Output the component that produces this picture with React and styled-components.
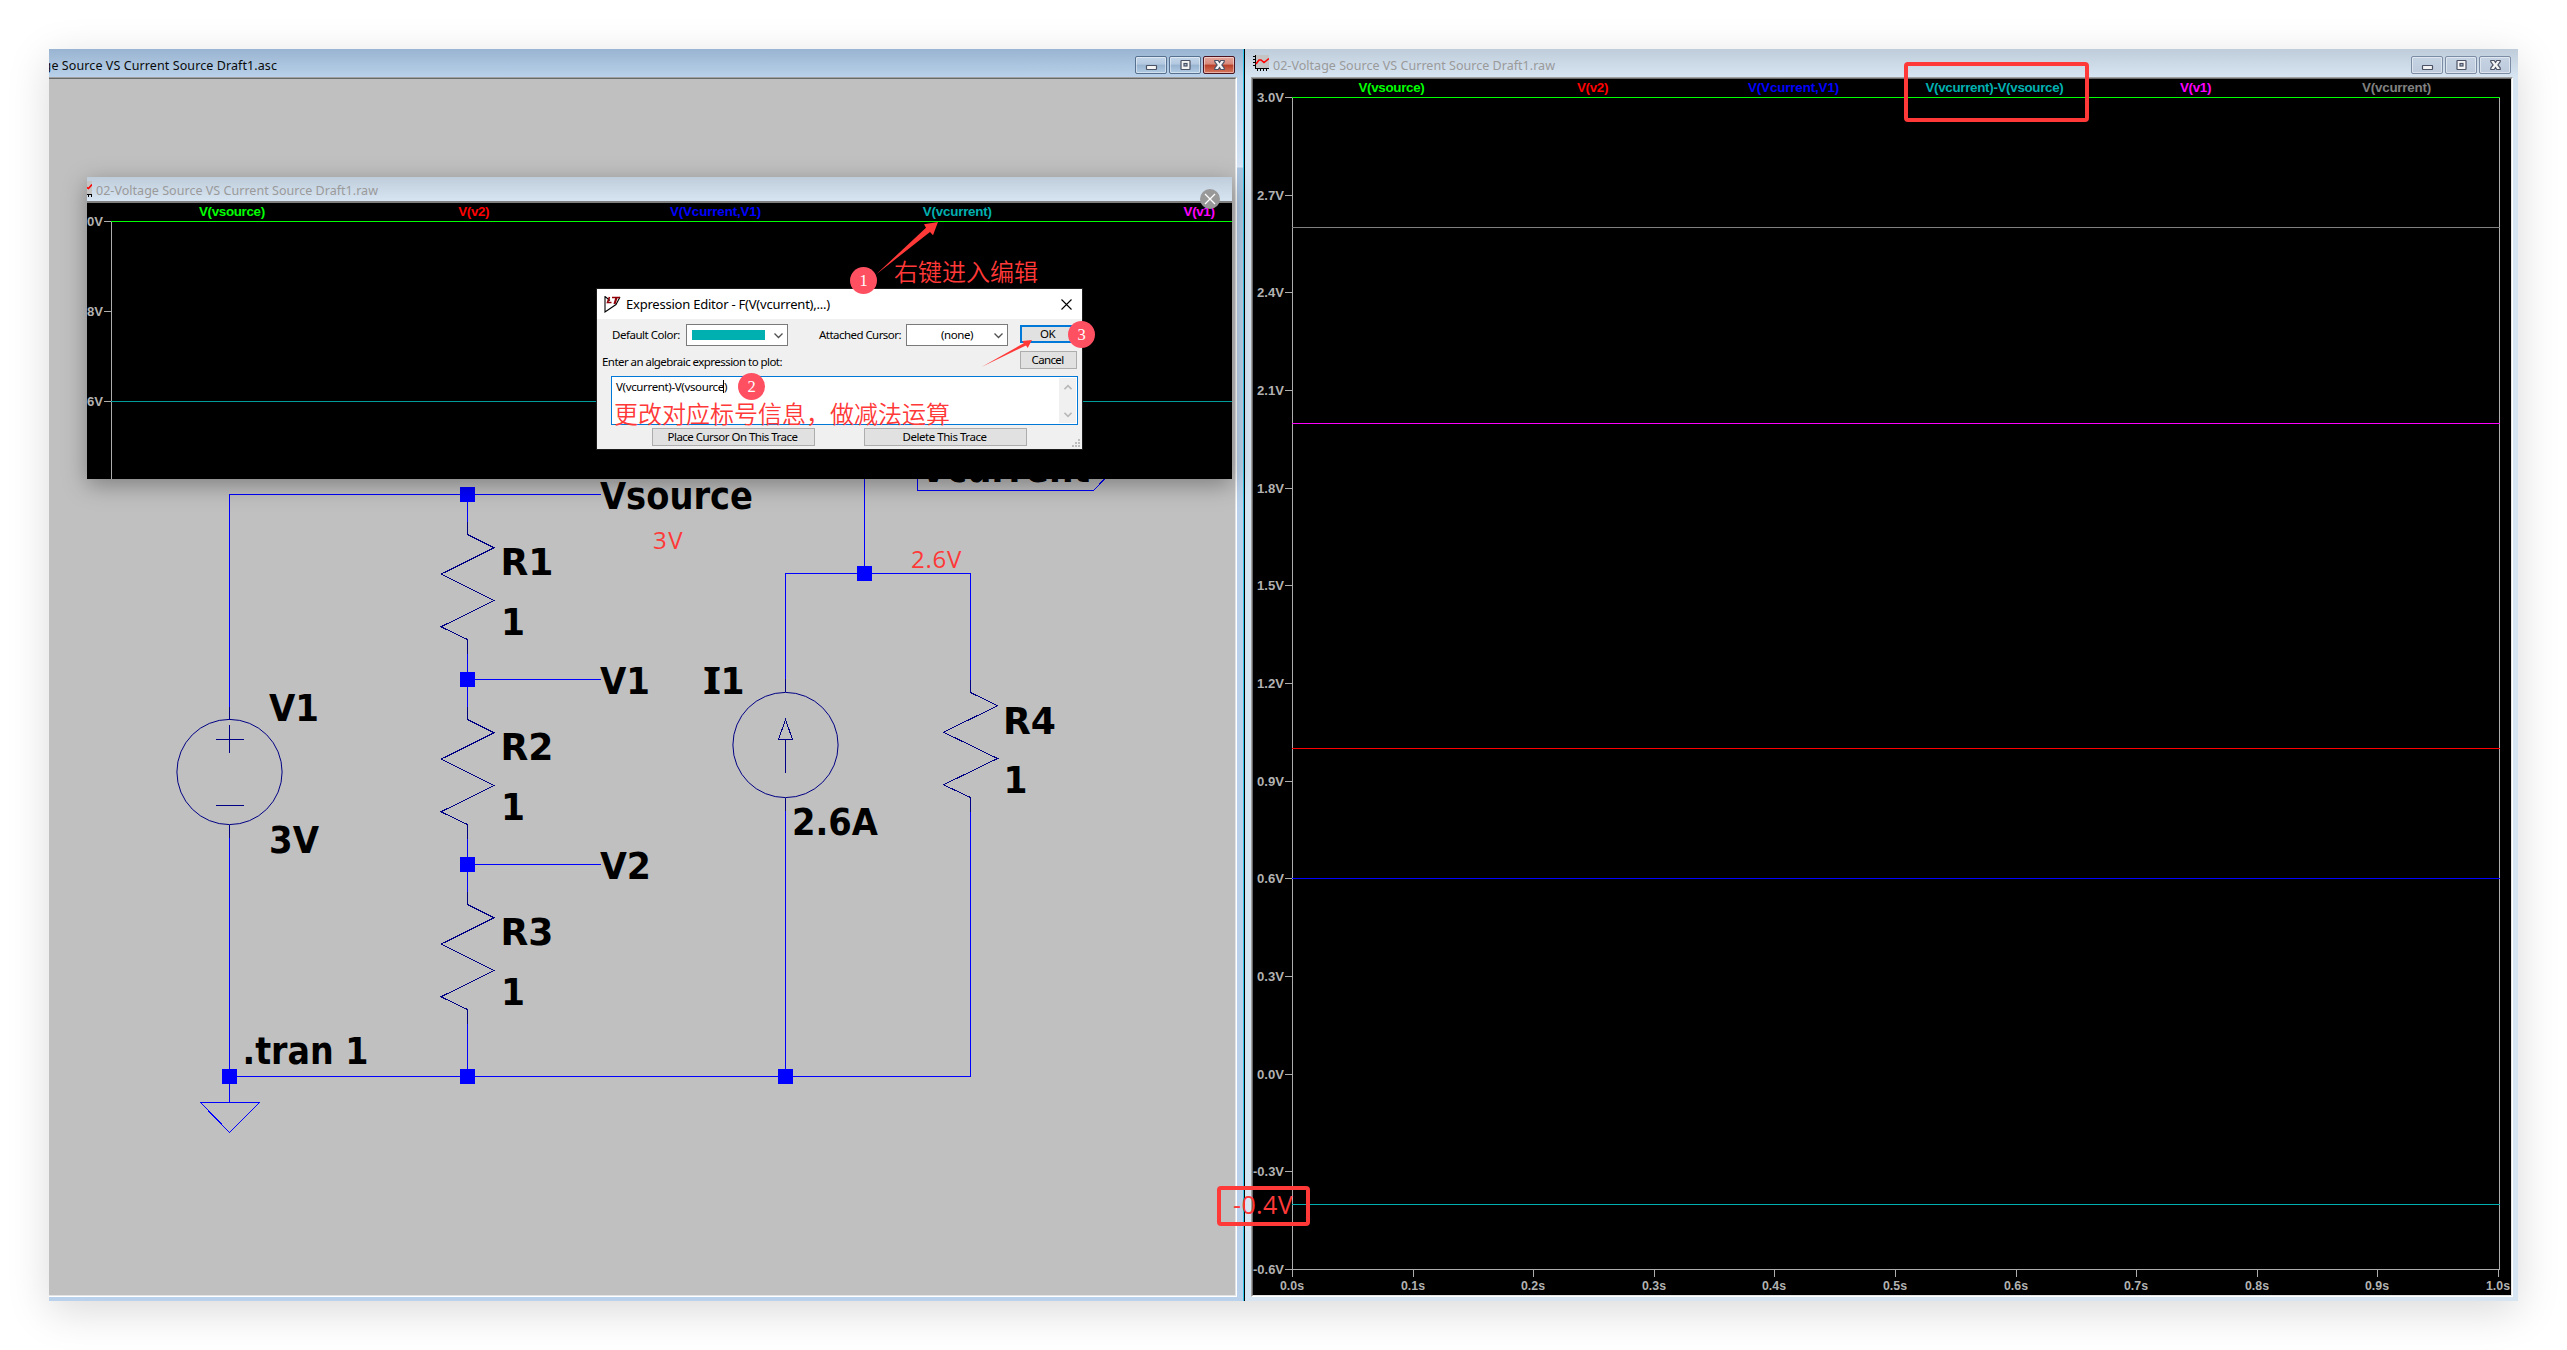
import React, { useLayoutEffect, useRef, useState } from "react";
import styled, { createGlobalStyle, css } from "styled-components";

const Global = createGlobalStyle`
  * { box-sizing: border-box; }
  body { margin: 0; background: #fff; overflow: hidden; }
`;

const UI = `"Noto Sans", "Open Sans", "Noto Sans CJK SC", sans-serif`;
const RED = "#ff3838";

/* Text spread to an exact width by adjusting its letter spacing */
const FitText = styled.span`
  display: inline-block;
  white-space: pre;
  flex: none;
`;
function Fit({ w, children }) {
  const ref = useRef(null);
  const [ls, setLs] = useState(0);
  useLayoutEffect(() => {
    const natural = ref.current.getBoundingClientRect().width;
    setLs((w - natural) / children.length);
  }, [w, children]);
  return (
    <FitText ref={ref} style={{ letterSpacing: ls }}>
      {children}
    </FitText>
  );
}

const Page = styled.div`
  width: 2567px;
  height: 1350px;
  padding: 49px;
  font-family: ${UI};
  position: relative;
  overflow: hidden;
`;
const Desktop = styled.main`
  display: flex;
  width: 2469px;
  height: 1252px;
  box-shadow: 0 10px 40px rgba(0, 0, 0, 0.15);
`;
const Window = styled.section`
  display: flex;
  flex-direction: column;
  width: ${(p) => p.$w}px;
  height: 1252px;
  padding: ${(p) => (p.$active ? "0 6px 4px 0" : "0 5px 4px 6px")};
  background: ${(p) =>
    p.$active
      ? "linear-gradient(#99b4d1 0, #b9d1ea 28px, #d3e2f4 115px, #dae7f6 118px, #abc5e0 119px, #b9d1ea 250px)"
      : "linear-gradient(#bfcddb 0, #d7e4f2 28px)"};
`;
const Divider = styled.div`
  width: 2px;
  background: #000;
  border-left: 1px solid #2cc4e8;
`;
const TitleBar = styled.header`
  display: flex;
  align-items: center;
  height: ${(p) => p.$h || 28}px;
  flex: none;
  gap: 4px;
  overflow: hidden;
  padding: 0 0 0 ${(p) => p.$pl || 0}px;
  background: ${(p) =>
    p.$active ? "linear-gradient(#99b4d1, #b9d1ea)" : "linear-gradient(#bfcddb, #d7e4f2)"};
`;
const Title = styled.div`
  flex: 1;
  font-size: 12.5px;
  line-height: 18px;
  padding-top: ${(p) => p.$pt || 6}px;
  margin-left: ${(p) => p.$ml || 0}px;
  color: ${(p) => (p.$active ? "#0a0a0a" : "#9a9a9a")};
`;
const Controls = styled.div`
  display: flex;
  gap: 2px;
  align-self: flex-start;
  margin: 7px ${(p) => p.$mr}px 0 0;
`;
const ControlButton = styled.span`
  width: 32px;
  height: 18px;
  border-radius: 2px;
  display: grid;
  place-items: center;
  border: 1px solid #7d8ca5;
  box-shadow: inset 0 0 0 1px rgba(255, 255, 255, 0.45);
  background: linear-gradient(#c5d3e3, #bccadc);
  ${(p) =>
    p.$kind === "active" &&
    css`
      border-color: #56708f;
      background: linear-gradient(#c3d6ea 0, #b3c8df 45%, #98b3d0 50%, #b1cbe4 100%);
    `}
  ${(p) =>
    p.$kind === "close" &&
    css`
      border-color: #4b1420;
      background: linear-gradient(#e5a79c 0, #d7887a 45%, #b93f29 50%, #d5775f 100%);
    `}
`;
const Body = styled.div`
  flex: 1;
  min-height: 0;
  display: flex;
  border-top: 1px solid #a0a0a0;
  border-left: ${(p) => (p.$cut ? 0 : 1)}px solid #a0a0a0;
  border-right: 1px solid #fff;
  border-bottom: 1px solid #fff;
`;
const BodyInner = styled.div`
  flex: 1;
  min-width: 0;
  display: flex;
  flex-direction: column;
  background: ${(p) => p.$bg};
  border-top: 1px solid #696969;
  border-left: ${(p) => (p.$cut ? 0 : 1)}px solid #696969;
  border-right: 1px solid #e3e3e3;
  border-bottom: 1px solid #e3e3e3;
`;
const Legend = styled.div`
  display: grid;
  grid-template-columns: repeat(6, ${(p) => p.$col}px);
  padding-left: ${(p) => p.$pl}px;
  height: 18px;
  flex: none;
`;
const LegendItem = styled.div`
  display: flex;
  justify-content: center;
  font: bold 13.4px/17px "Liberation Sans", Arial, sans-serif;
  color: ${(p) => p.$c};
`;
const Drawing = styled.svg`
  display: block;
  flex: none;
  overflow: ${(p) => (p.$clip ? "hidden" : "visible")};
`;
const AxisText = styled.text`
  font: bold 13.4px "Liberation Sans", Arial, sans-serif;
  fill: #b2b2b2;
`;
const PartText = styled.text`
  font-family: ${(p) => (p.$serifI ? `"Noto Sans"` : `"DejaVu Sans Condensed", "DejaVu Sans"`)}, sans-serif;
  font-stretch: ${(p) => (p.$serifI ? "normal" : "condensed")};
  font-weight: bold;
  font-size: 37.5px;
  fill: #000;
`;

/* Windows floating over the desktop */
const FloatingPlot = styled.section`
  position: absolute;
  left: 87px;
  top: 177px;
  width: 1145px;
  height: 302px;
  display: flex;
  flex-direction: column;
  background: #000;
  box-shadow: 0 6px 22px rgba(0, 0, 0, 0.34);
`;
const PlotClip = styled.div`
  flex: 1;
  overflow: hidden;
  border-top: 2px solid #808080;
`;
const CloseBadge = styled.span`
  position: absolute;
  left: 1113px;
  top: 12px;
  width: 20px;
  height: 20px;
  border-radius: 50%;
  background: #989898;
  display: grid;
  place-items: center;
`;
const Dialog = styled.section`
  position: absolute;
  left: 596px;
  top: 288px;
  width: 487px;
  height: 162px;
  border: 1px solid #1c1c1c;
  background: #f0f0f0;
  display: flex;
  flex-direction: column;
  font-size: 11.5px;
  line-height: 16px;
  color: #000;
`;
const DialogTitle = styled.header`
  height: 30px;
  flex: none;
  background: #fff;
  display: flex;
  align-items: center;
  gap: 5px;
  padding: 0 10px 0 7px;
  font-size: 13px;
`;
const Spacer = styled.div`
  flex: 1;
`;
const DialogRows = styled.div`
  display: flex;
  height: 57px;
  flex: none;
`;
const Fields = styled.div`
  width: 423px;
  padding: 5px 0 0 5px;
  display: flex;
  flex-direction: column;
  align-items: flex-start;
  gap: 8px;
`;
const FieldRow = styled.div`
  display: flex;
  height: 22px;
  align-items: center;
  padding-left: 10px;
`;
const Select = styled.div`
  width: 102px;
  height: 22px;
  margin: 0 ${(p) => p.$mr || 0}px 0 ${(p) => p.$ml}px;
  border: 1px solid #7a7a7a;
  background: #fff;
  display: flex;
  align-items: center;
  justify-content: space-between;
  padding: 0 4px 0 ${(p) => p.$pl}px;
`;
const Swatch = styled.i`
  width: 73px;
  height: 10px;
  background: #00b0b0;
`;
const Actions = styled.div`
  display: flex;
  flex-direction: column;
  gap: 8px;
  padding-top: 6px;
`;
const Button = styled.div`
  width: ${(p) => p.$w}px;
  height: 18px;
  background: #e1e1e1;
  border: ${(p) => (p.$primary ? "2px solid #0078d7" : "1px solid #adadad")};
  display: flex;
  align-items: center;
  justify-content: center;
  padding-right: 2px;
`;
const Editor = styled.div`
  margin: 0 4px 0 14px;
  height: 49px;
  flex: none;
  border: 1px solid #0078d7;
  background: #fff;
  display: flex;
  justify-content: space-between;
  padding: 1px;
`;
const Expression = styled.div`
  padding-left: 3px;
  height: 17px;
  display: flex;
  align-items: center;
`;
const Caret = styled.i`
  width: 1px;
  height: 13px;
  margin-left: -4px;
  background: #000;
`;
const ScrollTrack = styled.div`
  width: 17px;
  background: #f0f0f0;
  display: flex;
  flex-direction: column;
  align-items: center;
  justify-content: space-between;
  padding: 6px 0 5px;
`;
const Footer = styled.div`
  display: flex;
  gap: 49px;
  padding: 3px 0 0 55px;
`;
const Grip = styled.svg`
  position: absolute;
  right: 2px;
  bottom: 2px;
`;

/* Review marks drawn above everything */
const Note = styled.div`
  position: absolute;
  left: ${(p) => p.$x}px;
  top: ${(p) => p.$y}px;
  height: 34px;
  line-height: 34px;
  font-size: ${(p) => p.$s || 24}px;
  font-family: ${(p) => (p.$cjk ? `"Noto Sans CJK SC", sans-serif` : `"Open Sans", sans-serif`)};
  font-weight: ${(p) => (p.$cjk ? 350 : 400)};
  color: ${RED};
  white-space: nowrap;
`;
const Frame = styled.div`
  position: absolute;
  left: ${(p) => p.$x}px;
  top: ${(p) => p.$y}px;
  width: ${(p) => p.$w}px;
  height: ${(p) => p.$h}px;
  border: 4px solid ${RED};
  border-radius: 4px;
`;
const Step = styled.div`
  position: absolute;
  left: ${(p) => p.$x - 13.5}px;
  top: ${(p) => p.$y - 13.5}px;
  width: 27px;
  height: 27px;
  border-radius: 50%;
  background: #ff5062;
  color: #fff;
  font: 16.5px/28px "Liberation Serif", serif;
  text-align: center;
`;
const Arrows = styled.svg`
  position: absolute;
  left: 870px;
  top: 215px;
  pointer-events: none;
`;

const GLYPHS = {
  min: <rect x="1.5" y="6.5" width="10" height="4" rx="0.5" />,
  max: (
    <g>
      <rect x="2" y="1.5" width="9" height="9" rx="0.5" />
      <rect x="5" y="4.5" width="3" height="2.5" fill="#aebfd4" />
    </g>
  ),
  close: <path d="M1.8 1.5h3.4L6.5 3.4 7.8 1.5h3.4v1.4L8.9 5.9l2.3 3v1.6H7.8L6.5 8.6 5.2 10.5H1.8V8.9L4.1 5.9 1.8 2.9z" />,
};
function WindowControls({ active, mr }) {
  return (
    <Controls $mr={mr}>
      {["min", "max", "close"].map((k) => (
        <ControlButton key={k} $kind={active ? (k === "close" ? "close" : "active") : "idle"}>
          <svg width="13" height="12" fill="#f4f4f4" stroke="#4c5265" strokeWidth="1.2">
            {GLYPHS[k]}
          </svg>
        </ControlButton>
      ))}
    </Controls>
  );
}

function PlotIcon() {
  return (
    <svg width="16" height="17" viewBox="0 0 16 17" shapeRendering="crispEdges">
      <rect x="2" width="14" height="14" fill="#c4c4c4" />
      <path d="M2.5 0v14M2 13.5h14M0 1.5h2M0 4.5h2M0 7.5h2M0 10.5h2M4.5 14v2M7.5 14v2M10.5 14v2M13.5 14v2" stroke="#000" fill="none" />
      <path d="M3 9l3-4h2l3 2.500 5-4" stroke="#f00" strokeWidth="1.6" fill="none" shapeRendering="auto" />
    </svg>
  );
}

function Plot({ box, axisX, endX, top, bottom, ticks, traces, xTicks, labelW }) {
  const [x, y, w, h] = box;
  return (
    <Drawing width={w} height={h} viewBox={box.join(" ")}>
      <g stroke="#adadad" shapeRendering="crispEdges">
        <path d={`M${axisX + 0.5} ${top}V${bottom + 1}`} />
        {endX && <path d={`M${endX - 0.5} ${top}V${bottom}M${axisX} ${bottom + 0.5}H${endX}`} />}
        {ticks.map(([, ty]) => (
          <path key={ty} d={`M${axisX - 7} ${ty + 0.5}h7`} />
        ))}
        {xTicks.map(([, tx]) => (
          <path key={tx} d={`M${tx + 0.5} ${bottom}v8`} />
        ))}
      </g>
      {ticks.map(([label, ty]) => (
        <AxisText
          key={label}
          x={axisX - 8}
          y={ty + 5}
          textAnchor="end"
          textLength={label[0] === "-" ? labelW + 4 : labelW}
          lengthAdjust="spacingAndGlyphs"
        >
          {label}
        </AxisText>
      ))}
      {xTicks.map(([label, tx]) => (
        <AxisText key={label} x={tx} y={bottom + 21} textAnchor="middle" textLength="24" lengthAdjust="spacingAndGlyphs">
          {label}
        </AxisText>
      ))}
      <g shapeRendering="crispEdges">
        {traces.map(([c, ty]) => (
          <path key={c} d={`M${axisX} ${ty + 0.5}H${endX || x + w}`} stroke={c} />
        ))}
      </g>
    </Drawing>
  );
}

const MAIN_LEGEND = [
  ["V(vsource)", "#00ff00", 66],
  ["V(v2)", "#ff0000", 31],
  ["V(Vcurrent,V1)", "#0000ff", 91],
  ["V(vcurrent)-V(vsource)", "#00b0b0", 138],
  ["V(v1)", "#ff00ff", 31],
  ["V(vcurrent)", "#808080", 69],
];
const FLOAT_LEGEND = [
  ["V(vsource)", "#00ff00", 66],
  ["V(v2)", "#ff0000", 31],
  ["V(Vcurrent,V1)", "#0000ff", 91],
  ["V(vcurrent)", "#00b0b0", 69],
  ["V(v1)", "#ff00ff", 31],
];
const V_TICKS = Array.from({ length: 13 }, (_, i) => [
  `${(3 - i * 0.3).toFixed(1).replace("-0.0", "0.0")}V`,
  Math.round(97 + i * 97.67),
]);
const S_TICKS = Array.from({ length: 11 }, (_, i) => [`${(i / 10).toFixed(1)}s`, Math.round(1292 + i * 120.6)]);

const zigzag = (x, y, half) =>
  `M${x} ${y - 13}V${y}L${x + half} ${y + 13.3}L${x - half} ${y + 39.7}L${x + half} ${y + 66}L${x - half} ${y + 92.3}L${x} ${y + 105}V${y + 119}`;

const PARTS = [
  ["Vsource", 600, 509, 153],
  ["R1", 500.500, 575, 53],
  ["1", 501, 635, 24],
  ["V1", 600, 694, 50],
  ["R2", 500.500, 760, 53],
  ["1", 501, 820, 24],
  ["V2", 600, 879, 51],
  ["R3", 500.500, 945, 53],
  ["1", 501, 1005, 24],
  ["V1", 269, 721, 50],
  ["3V", 269, 852.5, 50],
  [".tran 1", 242.500, 1063.5, 126],
  ["1", 720.500, 694, 24],
  ["2.6A", 792, 835, 86],
  ["R4", 1003, 734, 53],
  ["1", 1003.500, 793, 24],
  ["Vcurrent", 920, 482, 170],
];
const NODES = [
  [467, 494],
  [467, 679],
  [467, 864],
  [467, 1076],
  [229, 1076],
  [864, 573],
  [785, 1076],
];

function Schematic() {
  return (
    <Drawing width="1186" height="1216" viewBox="49 79 1186 1216" $clip>
      <g fill="none" stroke="#0000ff" shapeRendering="crispEdges">
        <path d="M229.500 720V494.500H601M467.500 494V534M467.500 640V720M467.500 825V905M467.500 1010V1076M467.500 679.500H601M467.500 864.500H601" />
        <path d="M229.500 825V1102.500M200.500 1102.500H259.500L229.500 1132.500ZM229 1076.500H970.500V799M970.500 692V573.500H785.500V692M785.500 798V1076M864.500 573V440" />
        <path d="M917.500 440V490.500H1093.500L1116 467" />
      </g>
      <g fill="none" stroke="#000084" strokeWidth="1">
        <g shapeRendering="crispEdges">
          <path d={zigzag(467.5, 534.5, 26.5)} />
          <path d={zigzag(467.5, 719.5, 26.5)} />
          <path d={zigzag(467.5, 904.5, 26.5)} />
          <path d={zigzag(970.5, 692.5, 27)} />
          <path d="M229.500 707V719M229.500 825V838M216 739.500H244M229.500 725V753M216 805.500H244" />
          <path d="M785.500 679V692M785.500 798V811M785.500 719.500L778.500 739.500H792.500ZM785.500 739V773" />
        </g>
        <circle cx="229.500" cy="772" r="52.600" />
        <circle cx="785.500" cy="745" r="52.600" />
      </g>
      <g fill="#0000ff">
        {NODES.map(([x, y]) => (
          <rect key={`${x}-${y}`} x={x - 7} y={y - 7} width="15" height="15" />
        ))}
      </g>
      {PARTS.map(([t, x, y, w]) => (
        <PartText key={`${t}-${x}-${y}`} x={x} y={y} textLength={w} lengthAdjust="spacingAndGlyphs">
          {t}
        </PartText>
      ))}
      <PartText $serifI x="703" y="694" textLength="18" lengthAdjust="spacingAndGlyphs">
        I
      </PartText>
    </Drawing>
  );
}

const Chevron = ({ up, c = "#505050", w = 9 }) => (
  <svg width={w} height="7" viewBox="0 0 9 7" fill="none" stroke={c} strokeWidth={w > 8 ? 1.3 : 1.8}>
    <path d={up ? "M.5 5.500L4.500 1.500 8.500 5.500" : "M.5 1.500L4.500 5.500 8.500 1.500"} />
  </svg>
);

function ExpressionEditor() {
  return (
    <Dialog>
      <DialogTitle>
        <svg width="17" height="17" viewBox="0 0 17 17" fill="none">
          <path d="M16 1L12 8.500 1 16V.5L6 4.500" stroke="#000" strokeWidth="1.1" />
          <path d="M5.500 1L3.500 6.500H7.500M8 1.500H16" stroke="#900008" strokeWidth="1.6" />
          <path d="M12.500 1.500L10.500 8" stroke="#900008" strokeWidth="2.2" />
        </svg>
        <Fit w={204}>Expression Editor - F(V(vcurrent),...)</Fit>
        <Spacer />
        <svg width="11" height="11" stroke="#000" strokeWidth="1.1">
          <path d="M.5 .5L10.500 10.500M10.500 .5L.5 10.500" />
        </svg>
      </DialogTitle>
      <DialogRows>
        <Fields>
          <FieldRow>
            <Fit w={68}>Default Color:</Fit>
            <Select $ml={6} $mr={31} $pl={5}>
              <Swatch />
              <Chevron />
            </Select>
            <Fit w={82}>Attached Cursor:</Fit>
            <Select $ml={5} $pl={34}>
              <Fit w={32}>(none)</Fit>
              <Chevron />
            </Select>
          </FieldRow>
          <Fit w={180}>Enter an algebraic expression to plot:</Fit>
        </Fields>
        <Actions>
          <Button $w={57} $primary>
            <Fit w={15}>OK</Fit>
          </Button>
          <Button $w={57}>
            <Fit w={32}>Cancel</Fit>
          </Button>
        </Actions>
      </DialogRows>
      <Editor>
        <Expression>
          <Fit w={111}>V(vcurrent)-V(vsource)</Fit>
          <Caret />
        </Expression>
        <ScrollTrack>
          <Chevron up c="#b8b8b8" w={8} />
          <Chevron c="#b8b8b8" w={8} />
        </ScrollTrack>
      </Editor>
      <Footer>
        <Button $w={163}>
          <Fit w={130}>Place Cursor On This Trace</Fit>
        </Button>
        <Button $w={163}>
          <Fit w={84}>Delete This Trace</Fit>
        </Button>
      </Footer>
      <Grip width="8" height="8" fill="#bdbdbd">
        <path d="M6 0h2v2H6zM3 3h2v2H3zM6 3h2v2H6zM0 6h2v2H0zM3 6h2v2H3zM6 6h2v2H6z" />
      </Grip>
    </Dialog>
  );
}

export default function App() {
  return (
    <Page>
      <Global />
      <Desktop>
        <Window $w={1194} $active>
          <TitleBar $active>
            <Title $active $ml={-54}>
              <Fit w={282}>02-Voltage Source VS Current Source Draft1.asc</Fit>
            </Title>
            <WindowControls active mr={2} />
          </TitleBar>
          <Body $cut>
            <BodyInner $cut $bg="#c0c0c0">
              <Schematic />
            </BodyInner>
          </Body>
        </Window>
        <Divider />
        <Window $w={1273}>
          <TitleBar $pl={2}>
            <PlotIcon />
            <Title>
              <Fit w={282}>02-Voltage Source VS Current Source Draft1.raw</Fit>
            </Title>
            <WindowControls mr={2} />
          </TitleBar>
          <Body>
            <BodyInner $bg="#000">
              <Legend $col={201} $pl={38}>
                {MAIN_LEGEND.map(([t, c, w]) => (
                  <LegendItem key={t} $c={c}>
                    <Fit w={w}>{t}</Fit>
                  </LegendItem>
                ))}
              </Legend>
              <Plot
                box={[1253, 97, 1258, 1198]}
                axisX={1292}
                endX={2500}
                top={97}
                bottom={1269}
                labelW={27}
                ticks={V_TICKS}
                xTicks={S_TICKS}
                traces={[
                  ["#00ff00", 97],
                  ["#808080", 227],
                  ["#ff00ff", 423],
                  ["#ff0000", 748],
                  ["#0000ff", 878],
                  ["#00b0b0", 1204],
                ]}
              />
            </BodyInner>
          </Body>
        </Window>
      </Desktop>

      <FloatingPlot>
        <TitleBar $h={24}>
          <svg width="5" height="17" viewBox="11 0 5 17">
            <path d="M11 0h5v14h-5z" fill="#c4c4c4" />
            <path d="M11 13.500h5M12.500 14v2M15.500 14v2" stroke="#000" />
            <path d="M11 6.500l1.500 1L16 3.500" stroke="#f00" strokeWidth="1.600" fill="none" />
          </svg>
          <Title $pt={3}>
            <Fit w={282}>02-Voltage Source VS Current Source Draft1.raw</Fit>
          </Title>
        </TitleBar>
        <PlotClip>
          <Legend $col={241.8} $pl={24}>
            {FLOAT_LEGEND.map(([t, c, w]) => (
              <LegendItem key={t} $c={c}>
                <Fit w={w}>{t}</Fit>
              </LegendItem>
            ))}
          </Legend>
          <Plot
            box={[87, 221, 1145, 258]}
            axisX={111}
            top={221}
            bottom={479}
            labelW={27}
            ticks={[
              ["3.0V", 221],
              ["2.8V", 311],
              ["2.6V", 401],
            ]}
            xTicks={[]}
            traces={[
              ["#00ff00", 221],
              ["#009c9c", 401],
            ]}
          />
        </PlotClip>
        <CloseBadge>
          <svg width="12" height="12" stroke="#fff" strokeWidth="1.300">
            <path d="M1 1L11 11M11 1L1 11" />
          </svg>
        </CloseBadge>
      </FloatingPlot>

      <ExpressionEditor />

      <Arrows width="170" height="160" viewBox="870 215 170 160" fill={RED}>
        <path d="M938 222L924 224.300L926 227.700L876 274.500L930 232L933 235.300Z" />
        <path d="M1032 340L1022.500 341L1023.700 343.300L981.500 367L1026 345.500L1027.700 348Z" />
      </Arrows>
      <Note $x={894} $y={254} $cjk>右键进入编辑</Note>
      <Note $x={614} $y={396} $cjk>更改对应标号信息，做减法运算</Note>
      <Note $x={653} $y={523}>
        <Fit w={31}>3V</Fit>
      </Note>
      <Note $x={911} $y={542}>
        <Fit w={51}>2.6V</Fit>
      </Note>
      <Note $x={1233} $y={1187} $s={25}>
        <Fit w={60}>-0.4V</Fit>
      </Note>
      <Step $x={863.5} $y={280.5}>1</Step>
      <Step $x={751.5} $y={386.5}>2</Step>
      <Step $x={1081.5} $y={334.5}>3</Step>
      <Frame $x={1904} $y={62} $w={185} $h={60} />
      <Frame $x={1217} $y={1186} $w={93} $h={40} />
    </Page>
  );
}
